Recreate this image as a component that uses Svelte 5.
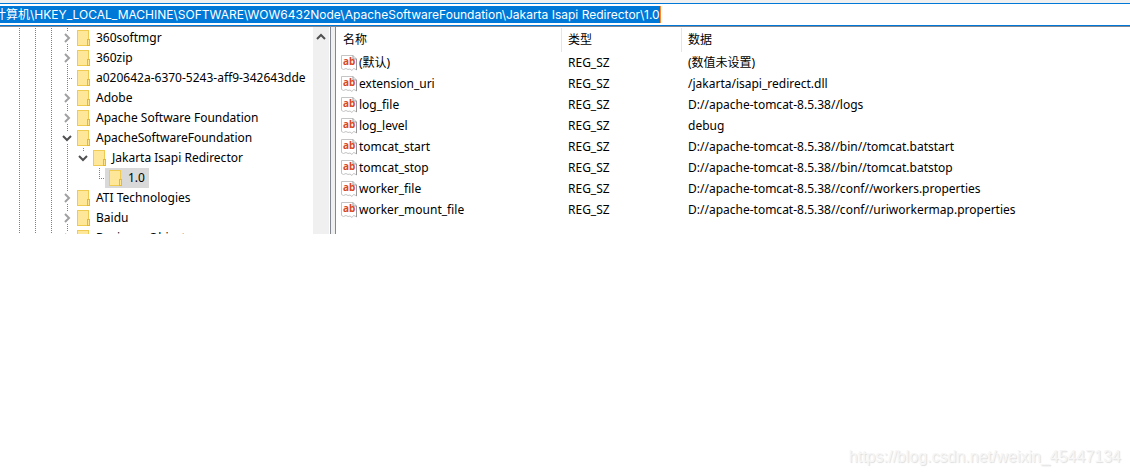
<script lang="ts">
  type Toggle = 'closed' | 'open' | 'leaf' | 'end';

  type TreeKey = {
    name: string;
    // one entry per ancestor level, true when its line carries on past this row
    guides: boolean[];
    toggle: Toggle;
  };

  const base = [true, true, true];

  const treeKeys: TreeKey[] = [
    { name: '360softmgr', guides: base, toggle: 'closed' },
    { name: '360zip', guides: base, toggle: 'closed' },
    { name: 'a020642a-6370-5243-aff9-342643dde', guides: base, toggle: 'leaf' },
    { name: 'Adobe', guides: base, toggle: 'closed' },
    { name: 'Apache Software Foundation', guides: base, toggle: 'closed' },
    { name: 'ApacheSoftwareFoundation', guides: base, toggle: 'open' },
    { name: 'Jakarta Isapi Redirector', guides: [...base, true], toggle: 'open' },
    { name: '1.0', guides: [...base, true, false], toggle: 'end' },
    { name: 'ATI Technologies', guides: base, toggle: 'closed' },
    { name: 'Baidu', guides: base, toggle: 'closed' },
    { name: 'Business Objects', guides: base, toggle: 'closed' }
  ];

  const values = [
    { name: '(默认)', data: '(数值未设置)' },
    { name: 'extension_uri', data: '/jakarta/isapi_redirect.dll' },
    { name: 'log_file', data: 'D://apache-tomcat-8.5.38//logs' },
    { name: 'log_level', data: 'debug' },
    { name: 'tomcat_start', data: 'D://apache-tomcat-8.5.38//bin//tomcat.batstart' },
    { name: 'tomcat_stop', data: 'D://apache-tomcat-8.5.38//bin//tomcat.batstop' },
    { name: 'worker_file', data: 'D://apache-tomcat-8.5.38//conf//workers.properties' },
    { name: 'worker_mount_file', data: 'D://apache-tomcat-8.5.38//conf//uriworkermap.properties' }
  ];

  let selected = $state('1.0');
  let address = $state(
    '计算机\\HKEY_LOCAL_MACHINE\\SOFTWARE\\WOW6432Node\\ApacheSoftwareFoundation\\Jakarta Isapi Redirector\\1.0'
  );
</script>

<div class="regedit">
  <div class="address-bar">
    <input class="address" type="text" aria-label="地址" spellcheck="false" bind:value={address} />
  </div>

  <main class="panes">
    <nav class="tree-pane">
      <ul class="tree">
        {#each treeKeys as key (key.name)}
          <li class="row">
            {#each key.guides as line}
              <span class="guide" class:line></span>
            {/each}
            {#if key.toggle === 'closed' || key.toggle === 'open'}
              <button
                class="toggle"
                class:nested={key.guides.length > 3}
                aria-label={key.name}
                aria-expanded={key.toggle === 'open'}
              >
                {#if key.toggle === 'open'}
                  <svg class="arrow open" viewBox="0 0 12 12"><path d="M2 4 6 8 10 4" /></svg>
                {:else}
                  <svg class="arrow" viewBox="0 0 12 12"><path d="M4 2 8 6 4 10" /></svg>
                {/if}
              </button>
            {:else}
              <span class="branch {key.toggle}"></span>
            {/if}
            <button
              class="key"
              class:selected={selected === key.name}
              onclick={() => (selected = key.name)}
            >
              <svg class="folder" viewBox="0 0 13 16">
                <rect x="0.5" y="0.5" width="11" height="15" fill="#ffe79a" stroke="#f0cb52" />
                <rect x="10.5" y="9.5" width="2" height="6" fill="#ffe48f" stroke="#e6b933" />
              </svg>
              <span>{key.name}</span>
            </button>
          </li>
        {/each}
      </ul>
      <div class="scrollbar">
        <button class="scroll-up" aria-label="向上滚动">
          <svg class="arrow open" viewBox="0 0 12 12"><path d="M2 8 6 4 10 8" /></svg>
        </button>
      </div>
    </nav>

    <section class="list-pane">
      <table>
        <thead>
          <tr>
            <th class="name-col">名称</th>
            <th class="type-col">类型</th>
            <th>数据</th>
          </tr>
        </thead>
        <tbody>
          {#each values as value (value.name)}
            <tr>
              <td>
                <div class="value-name">
                  <svg class="string-icon" viewBox="0 0 16 16">
                    <path
                      d="M0.5 0.5H12L15.5 4V15L14 14 12.5 13.5 11 15.5 9 14 7 14.5 5 13.5 2.5 14.5 0.5 13.5Z"
                      fill="#fff"
                      stroke="#c4c4c4"
                    />
                    <path d="M12 0.5V4H15.5V15" fill="none" stroke="#999" />
                    <text x="2" y="10">ab</text>
                  </svg>
                  <span>{value.name}</span>
                </div>
              </td>
              <td>REG_SZ</td>
              <td>{value.data}</td>
            </tr>
          {/each}
        </tbody>
      </table>
    </section>
  </main>

  <footer class="watermark">https://blog.csdn.net/weixin_45447134</footer>
</div>

<style>
  :global(body) {
    background: #fff;
  }

  .regedit {
    display: flex;
    flex-direction: column;
    min-height: 100vh;
    box-sizing: border-box;
    color: #000;
    font: 12px/20px 'Noto Sans', 'Noto Sans CJK SC', sans-serif;
  }

  button,
  input {
    padding: 0;
    border: 0;
    border-radius: 0;
    outline: 0;
    background: none;
    color: inherit;
    font: inherit;
  }

  .address-bar {
    display: flex;
    margin-top: 3px;
    padding: 1px 0;
    border: solid #0078d7;
    border-width: 1px 0;
    background: #fff;
    box-shadow: 0 -3px #f0f0f0;
    overflow: hidden;
  }

  .address {
    field-sizing: content;
    height: 17px;
    margin: 1px 0 1px -6px;
    border-right: 1px solid #ff8728;
    background: #0078d7;
    color: #fff;
    font-family: 'Inter', 'Noto Sans CJK SC', sans-serif;
    line-height: 17px;
  }

  .panes {
    display: flex;
    height: 207px;
    border-top: 1px solid #828790;
    background: #f0f0f0;
  }

  .tree-pane {
    display: flex;
    flex: none;
    width: 330px;
    border-right: 1px solid #828790;
    background: #fff;
  }

  .tree {
    flex: 1;
    min-width: 0;
    margin: 0;
    padding: 1px 0 0 11px;
    overflow: hidden;
    list-style: none;
  }

  .row {
    display: flex;
    height: 20px;
  }

  .guide,
  .toggle,
  .branch {
    flex: none;
    width: 16px;
    height: 20px;
    background-repeat: no-repeat;
  }

  .guide.line {
    background-image: repeating-linear-gradient(#808080 0 1px, transparent 1px 2px);
    background-position: 8px 0;
    background-size: 1px 100%;
  }

  .toggle {
    display: grid;
    place-items: center;
    background-image:
      repeating-linear-gradient(#808080 0 1px, transparent 1px 2px),
      repeating-linear-gradient(#808080 0 1px, transparent 1px 2px);
    background-position:
      8px 0,
      8px 16px;
    background-size:
      1px 4px,
      1px 4px;
  }

  .toggle.nested {
    background-size:
      1px 4px,
      0 0;
  }

  .branch {
    background-image:
      repeating-linear-gradient(#808080 0 1px, transparent 1px 2px),
      repeating-linear-gradient(90deg, #808080 0 1px, transparent 1px 2px);
    background-position:
      8px 0,
      8px 10px;
    background-size:
      1px 100%,
      6px 1px;
  }

  .branch.end {
    background-size:
      1px 10px,
      6px 1px;
  }

  .arrow {
    width: 12px;
    height: 12px;
    fill: none;
    stroke: #a0a0a0;
    stroke-width: 2;
  }

  .arrow.open {
    stroke: #505050;
  }

  .key {
    display: flex;
    align-items: center;
    gap: 6px;
    margin-left: -2px;
    padding: 0 4px;
    white-space: nowrap;
  }

  .key.selected {
    background: #d9d9d9;
  }

  .folder {
    flex: none;
    width: 13px;
    height: 16px;
  }

  .scrollbar {
    flex: none;
    width: 16px;
    margin-right: 1px;
    background: #f0f0f0;
  }

  .scroll-up {
    display: grid;
    place-items: center;
    width: 100%;
    height: 20px;
  }

  .list-pane {
    flex: 1;
    min-width: 0;
    margin-left: 4px;
    border-left: 1px solid #828790;
    background: #fff;
    overflow: hidden;
  }

  table {
    width: 100%;
    margin-top: 1px;
    border-collapse: separate;
    border-spacing: 0;
    table-layout: fixed;
  }

  th,
  td {
    box-sizing: border-box;
    height: 21px;
    padding: 0 0 0 6px;
    text-align: left;
    white-space: nowrap;
  }

  th {
    height: 24px;
    border-right: 1px solid #e5e5e5;
    font-weight: normal;
  }

  th:last-child {
    border-right: 0;
  }

  .name-col {
    width: 226px;
    padding-left: 7px;
  }

  .type-col {
    width: 120px;
  }

  td:first-child {
    padding-left: 5px;
  }

  .value-name {
    display: flex;
    align-items: center;
    gap: 2px;
  }

  .string-icon {
    flex: none;
    width: 16px;
    height: 16px;
    overflow: visible;
  }

  .string-icon text {
    fill: #d9481f;
    font: bold 10px 'Noto Sans', sans-serif;
  }

  .watermark {
    margin-top: auto;
    padding: 0 9px 8px;
    color: #f6f6f6;
    font: 16px/20px 'Liberation Sans', sans-serif;
    text-align: right;
    text-shadow: 1px 1px 1px #ddd;
  }
</style>
